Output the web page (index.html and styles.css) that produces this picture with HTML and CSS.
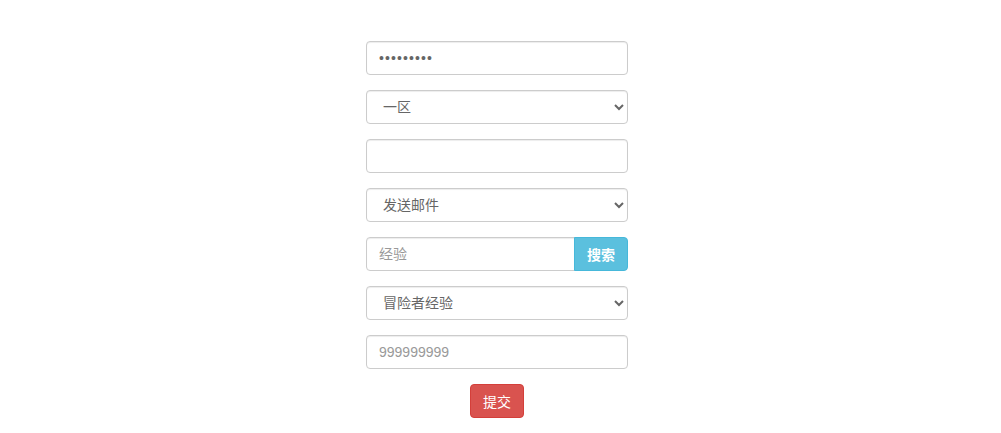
FILE: index.html
```html
<!DOCTYPE html>
<html lang="zh-CN">
<head>
<meta charset="utf-8">
<title>表单</title>
<link rel="stylesheet" href="styles.css">
</head>
<body>
<form class="form">
  <div class="row"><input class="control password" type="password" value="123456789"></div>
  <div class="row">
    <select class="control select">
      <option>一区</option>
      <option>二区</option>
    </select>
  </div>
  <div class="row"><input class="control" type="text"></div>
  <div class="row">
    <select class="control select">
      <option>发送邮件</option>
    </select>
  </div>
  <div class="row group">
    <input class="control group-input" type="text" placeholder="经验">
    <button type="button" class="btn btn-info group-btn">搜索</button>
  </div>
  <div class="row">
    <select class="control select">
      <option>冒险者经验</option>
    </select>
  </div>
  <div class="row"><input class="control" type="text" placeholder="999999999"></div>
  <div class="actions"><button type="submit" class="btn btn-danger">提交</button></div>
</form>
</body>
</html>
```

FILE: styles.css
```css
html, body {
  margin: 0;
  padding: 0;
  background: #fff;
}
body {
  font-family: "Liberation Sans", "Noto Sans CJK SC", sans-serif;
  font-size: 14px;
  color: #333;
}
.form {
  width: 262px;
  margin: 41px 0 0 366px;
  display: flex;
  flex-direction: column;
  gap: 15px;
}
.row {
  display: flex;
}
.control {
  box-sizing: border-box;
  width: 100%;
  height: 34px;
  padding: 6px 12px;
  font-family: "Liberation Sans", "Noto Sans CJK SC", sans-serif;
  font-size: 14px;
  color: #555;
  background: #fff;
  border: 1px solid #ccc;
  border-radius: 4px;
  box-shadow: inset 0 1px 1px rgba(0,0,0,.075);
  outline: none;
}
.control::placeholder {
  color: #999;
}
.password {
  letter-spacing: 1.1px;
  color: #666;
}
.select {
  padding-left: 12px;
  color: #666;
}
.group-input {
  flex: 1;
  border-radius: 4px 0 0 4px;
}
.btn {
  box-sizing: border-box;
  height: 34px;
  padding: 6px 12px;
  font-family: "Liberation Sans", "Noto Sans CJK SC", sans-serif;
  font-size: 14px;
  color: #fff;
  border: 1px solid transparent;
  border-radius: 4px;
  cursor: pointer;
}
.btn-info {
  background: #5bc0de;
  border-color: #46b8da;
}
.group-btn {
  width: 54px;
  margin-left: -1px;
  border-radius: 0 4px 4px 0;
  font-weight: bold;
}
.btn-danger {
  background: #d9534f;
  border-color: #d43f3a;
  width: 54px;
}
.actions {
  display: flex;
  justify-content: center;
}
```
